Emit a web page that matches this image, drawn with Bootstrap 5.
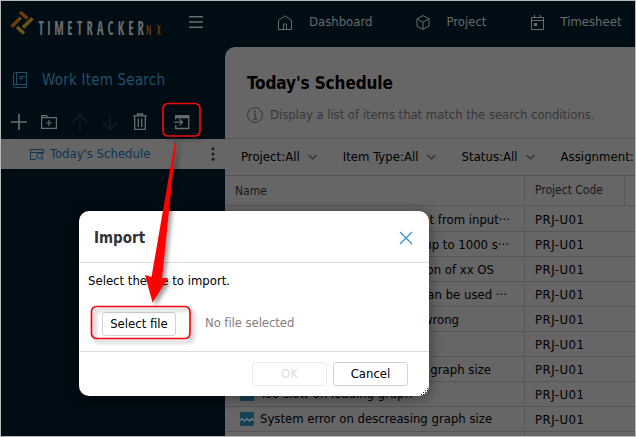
<!DOCTYPE html>
<html lang="en">
<head>
<meta charset="utf-8">
<meta name="viewport" content="width=device-width, initial-scale=1">
<title>TimeTracker NX - Import</title>
<link href="https://cdn.jsdelivr.net/npm/bootstrap@5.3.0/dist/css/bootstrap.min.css" rel="stylesheet">
<style>
body{font-family:"DejaVu Sans Condensed","DejaVu Sans",sans-serif;font-stretch:condensed;font-size:13px;line-height:20px;color:#000;overflow:hidden}
svg{display:block;flex:none}
.app{width:636px;height:437px;background:#000d14;border:1px solid #b9b9b9;overflow:hidden}
.topbar{height:46px;color:#686c6e}
.logo{margin:9px 0 0 9px;overflow:visible}
.burger{margin:15px 0 0 27px}
.top-link{height:42px;gap:17px;white-space:nowrap}
.t1{margin-left:75px}
.t2{margin-left:44px;gap:16px}
.t3{margin-left:45px;gap:16px}
.side{width:224px}
.side-title{height:65px;padding-left:12px;font-size:15px;letter-spacing:.22px;color:#25506a;gap:14px}
.tools{height:27px;padding-left:10px;color:#686c6e;gap:12px}
.tools .off{color:#141f25}
.tools .imp{margin-left:12px}
.current{height:30px;background:#666;color:#0b3453;padding:0 10px 0 29px;gap:6px}
.main{background:#666;border-top-left-radius:10px;overflow:hidden;min-width:0}
.head{height:92px;padding:25px 0 0 22px;border-bottom:1px solid #585858}
.head h1{font-size:17px;line-height:22px;font-weight:700;letter-spacing:-.1px;margin:0 0 11px}
.desc{color:#373737;gap:7px;letter-spacing:-.05px;white-space:nowrap}
.filters{height:37px;padding-left:16px;gap:26px;letter-spacing:.03px;border-bottom:1px solid #525252;white-space:nowrap}
.filter-item{gap:8px;flex:none}
.thead-row{height:30px;font-size:12px;color:#181818;border-bottom:1px solid #585858}
.thead-row .c-name{padding-left:10px}
.thead-row .c-code{border-right:1px solid #575757}
.trow{height:25px;border-bottom:1px solid #575757}
.thead-row + .trow{height:26px;padding-top:1px}
.c-name{width:300px;border-right:1px solid #575757;white-space:nowrap;flex:none}
.c-code{width:100px;padding-left:10px;flex:none}
.trow .c-code{letter-spacing:.5px}
.tail{text-align:right}
.tail,.c-code{line-height:25px}
.bugrow{padding-left:15px;gap:6px}
.r1{padding-right:14px}.r2{padding-right:15px}.r3{padding-right:30px}.r4{padding-right:17px}.r5{padding-right:65px}.r7{padding-right:33px}
.dialog{position:absolute;left:79px;top:211px;width:350px;height:185px;background:#fff;border-radius:10px;box-shadow:0 2px 14px rgba(0,0,0,.45)}
.d-head{height:52px;border-bottom:1px solid #dcdcdc;padding:3px 16px 0 15px}
.d-head h2{font-size:15px;font-weight:700;color:#333;margin:0}
.d-body{height:89px;border-bottom:1px solid #dcdcdc;padding:8px 0 0 9px}
.d-btn{font-size:13px;line-height:20px;height:24px;width:75px;padding:0;border:1px solid #d3d3d3;border-radius:3px;background:#fff;color:#000;font-family:inherit}
.d-btn:disabled{color:#ddd;border-color:#ebebeb;background:#fff;opacity:1}
.file-btn{margin:21px 29px 0 14px;width:74px}
.nofile{color:#808080;letter-spacing:-.08px;margin-bottom:3px}
.foot{gap:6px;padding:10px 21px 0 0}
.overlay-art{position:absolute;left:0;top:0}
.callout{filter:drop-shadow(3px 3px 2px rgba(0,0,0,.4))}
</style>
<script src="https://cdn.jsdelivr.net/npm/bootstrap@5.3.0/dist/js/bootstrap.bundle.min.js"></script>
</head>
<body>
<svg width="0" height="0" class="position-absolute"><defs>
<symbol id="chev" viewBox="0 0 9 6"><path d="M.5 1l4 3.800L8.500 1" fill="none" stroke="#333" stroke-width="1.200"/></symbol>
<symbol id="bug" viewBox="0 0 14 14"><rect width="14" height="14" rx="1" fill="#164256"/><path d="M0 8.500L2 6.500 4.500 9 7 6.500 9.500 9 12 6.500l2 2" fill="none" stroke="#758890" stroke-width="1.200"/></symbol>
</defs></svg>
<div class="app d-flex flex-column">
  <header class="topbar d-flex flex-shrink-0">
    <svg class="logo" width="152" height="28" viewBox="0 0 152 28">
      <g fill="none" stroke-width="3.400"><path d="M1.500 16.800l9.500-9.300" stroke="#6e3c10"/><path d="M10 2l7.500 6.500" stroke="#6e3c10"/><path d="M22.500 8.200L13 17.500" stroke="#6d5516"/><path d="M7 17l7 6.500" stroke="#6d5516"/></g>
      <g font-family="Open Sans,sans-serif" font-weight="700">
      <text transform="translate(28.500 25) scale(.62 1)" font-size="20" fill="#696b6c" textLength="55" lengthAdjust="spacing">TIME</text>
      <text transform="translate(67 25) scale(.62 1)" font-size="20" fill="#696b6c" textLength="108" lengthAdjust="spacing">TRACKER</text>
      <text transform="translate(136 25) scale(.66 1)" font-size="13.500" font-weight="600" fill="#6e3c10" textLength="22" lengthAdjust="spacing">NX</text>
      </g>
    </svg>
    <svg class="burger" width="14" height="12" fill="none" stroke="currentColor" stroke-width="1.500"><path d="M0 .8h14M0 6h14M0 11.200h14"/></svg>
    <nav class="d-flex">
      <a class="top-link t1 d-flex align-items-center text-reset text-decoration-none"><svg width="14" height="15" fill="none" stroke="currentColor"><path d="M.5 14.500v-9L7 .8l6.500 4.700v9zM5.500 14V9h3v5"/></svg><span>Dashboard</span></a>
      <a class="top-link t2 d-flex align-items-center text-reset text-decoration-none"><svg width="14" height="15" fill="none" stroke="currentColor"><path d="M7 .6l6 3.200v7.400L7 14.400l-6-3.200V3.800zM1 3.800l6 3.400 6-3.400M7 7.200v7"/></svg><span>Project</span></a>
      <a class="top-link t3 d-flex align-items-center text-reset text-decoration-none"><svg width="13" height="15" fill="none" stroke="currentColor"><path d="M.5 2.500h12v12H.5zM.5 5.500h12M3.500 0v3M9.500 0v3"/><path d="M3 8h3v3H3z" fill="currentColor" stroke="none"/></svg><span>Timesheet</span></a>
    </nav>
  </header>
  <div class="d-flex flex-grow-1">
    <aside class="side flex-shrink-0">
      <div class="side-title d-flex align-items-center">
        <svg width="15" height="16" fill="none" stroke="currentColor"><path d="M.5 2.500a2 2 0 0 1 2-2h11v15h-11a2 2 0 0 1-2-2zM.5 13.500a1.500 1.500 0 0 1 1.500-1h11.500M3.500.5v12M6 4.500h6M6 6.500h4"/></svg>
        <span>Work Item Search</span>
      </div>
      <div class="tools d-flex align-items-start">
        <svg width="16" height="20" fill="none" stroke="currentColor" stroke-width="1.700"><path d="M0 10h16M8 2v16"/></svg>
        <svg width="20" height="20" fill="none" stroke="currentColor" stroke-width="1.200"><path d="M2.600 16.400V3.600h5l1 2h8.800v10.800zM2.600 5.600h6M10 8v6M7 11h6"/></svg>
        <svg class="off" width="18" height="20" fill="none" stroke="currentColor" stroke-width="1.200"><path d="M9 18V2.500M1.500 10L9 2.500l7.500 7.500"/></svg>
        <svg class="off" width="18" height="20" fill="none" stroke="currentColor" stroke-width="1.200"><path d="M9 2v15.500M1.500 10L9 17.500l7.500-7.500"/></svg>
        <svg width="18" height="20" fill="none" stroke="currentColor" stroke-width="1.300"><path d="M2 3.800h14M6.500 3.500V2h5v1.500M3.700 4v13.400h10.600V4M7.300 6.500v8.500M10.700 6.500v8.500"/></svg>
        <svg class="imp" width="18" height="20" fill="none" stroke="currentColor" stroke-width="1.300"><path d="M2.700 7.500V4h13v12.500h-13V13M1 10.200h8.500M6.500 7.200l3 3-3 3"/><path d="M2 4.800h14.300" stroke-width="3"/></svg>
      </div>
      <div class="current d-flex align-items-center">
        <svg width="14" height="13" fill="none" stroke="currentColor"><path d="M6 11.500H.5V1.500h13V6M.5 4.500h13"/><circle cx="9.500" cy="7.800" r="2.800"/><path d="M11.500 10l2 2.500"/></svg>
        <span>Today's Schedule</span>
        <svg class="ms-auto" width="4" height="16" fill="#1c1c1c"><circle cx="2" cy="2.800" r="1.500"/><circle cx="2" cy="8" r="1.500"/><circle cx="2" cy="13.200" r="1.500"/></svg>
      </div>
    </aside>
    <main class="main flex-grow-1">
      <div class="head">
        <h1>Today's Schedule</h1>
        <div class="desc d-flex align-items-center"><svg width="16" height="16" fill="none" stroke="currentColor"><circle cx="8" cy="8" r="7.400"/><path d="M6 7h2.300v5M6 12h4.500"/><circle cx="8" cy="4.400" r="1" fill="currentColor" stroke="none"/></svg><span>Display a list of items that match the search conditions.</span></div>
      </div>
      <div class="filters d-flex align-items-center">
        <div class="filter-item d-flex align-items-center"><span>Project:All</span><svg width="9" height="6"><use href="#chev"/></svg></div>
        <div class="filter-item d-flex align-items-center"><span>Item Type:All</span><svg width="9" height="6"><use href="#chev"/></svg></div>
        <div class="filter-item d-flex align-items-center"><span>Status:All</span><svg width="9" height="6"><use href="#chev"/></svg></div>
        <div class="filter-item">Assignment:</div>
      </div>
      <div class="thead-row d-flex"><div class="c-name d-flex align-items-center">Name</div><div class="c-code d-flex align-items-center">Project Code</div></div>
      <div class="trow d-flex"><div class="c-name tail r1">t from input···</div><div class="c-code">PRJ-U01</div></div>
      <div class="trow d-flex"><div class="c-name tail r2">up to 1000 s···</div><div class="c-code">PRJ-U01</div></div>
      <div class="trow d-flex"><div class="c-name tail r3">on of xx OS</div><div class="c-code">PRJ-U01</div></div>
      <div class="trow d-flex"><div class="c-name tail r4">can be used ···</div><div class="c-code">PRJ-U01</div></div>
      <div class="trow d-flex"><div class="c-name tail r5">wrong</div><div class="c-code">PRJ-U01</div></div>
      <div class="trow d-flex"><div class="c-name"></div><div class="c-code">PRJ-U01</div></div>
      <div class="trow d-flex"><div class="c-name tail r7">g graph size</div><div class="c-code">PRJ-U01</div></div>
      <div class="trow d-flex"><div class="c-name d-flex align-items-center bugrow"><svg width="14" height="14"><use href="#bug"/></svg><span>Too slow on loading graph</span></div><div class="c-code">PRJ-U01</div></div>
      <div class="trow d-flex"><div class="c-name d-flex align-items-center bugrow"><svg width="14" height="14"><use href="#bug"/></svg><span>System error on descreasing graph size</span></div><div class="c-code">PRJ-U01</div></div>
      <div class="trow d-flex"><div class="c-name"></div></div>
    </main>
  </div>
</div>
<section class="dialog" role="dialog">
  <div class="d-head d-flex align-items-center justify-content-between"><h2>Import</h2><svg width="14" height="14" fill="none" stroke="#2f8fd0" stroke-width="1.200"><path d="M1 1l12 12M13 1L1 13"/></svg></div>
  <div class="d-body">
    <div>Select the file to import.</div>
    <div class="d-flex align-items-end"><button class="btn d-btn file-btn">Select file</button><span class="nofile">No file selected</span></div>
  </div>
  <div class="d-flex justify-content-end foot"><button class="btn d-btn" disabled>OK</button><button class="btn d-btn">Cancel</button></div>
</section>
<svg class="overlay-art" width="636" height="437" fill="none">
  <g class="callout"><rect x="91.500" y="306.500" width="98.500" height="32" rx="5" stroke="#f00a0e" stroke-width="1.700"/>
  <rect x="163" y="103.500" width="37" height="32.500" rx="5" stroke="#f00a0e" stroke-width="1.700"/>
  <path d="M175 141h1.200l-14.200 137.500 6-.5-15.400 24.500L145 275l6.500 2z" fill="red"/></g>
  <path d="M427 388.500h1M427 390.500h1M425 390.500h1M425 392.500h1M423 392.500h1M423 394.500h1M421 394.500h1" stroke="#222"/>
</svg>
</body>
</html>
